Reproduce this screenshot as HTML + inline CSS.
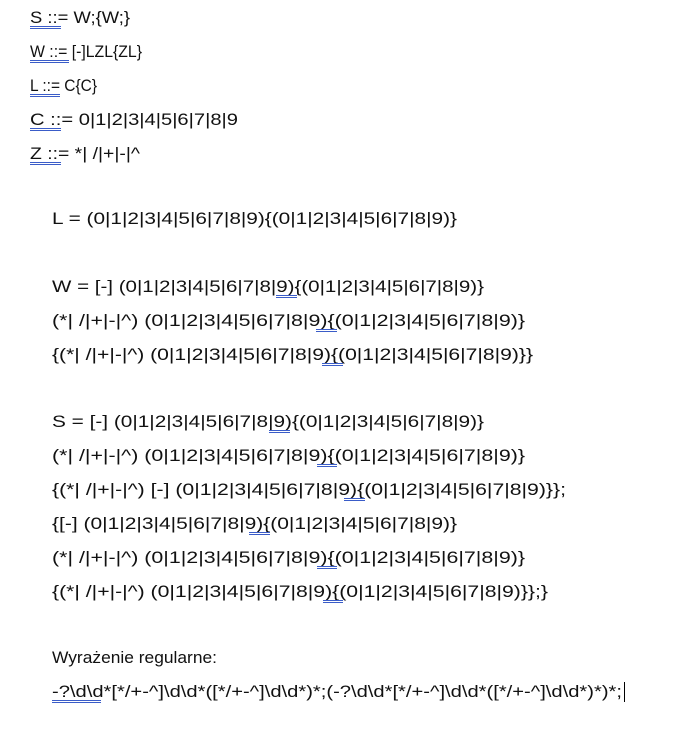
<!DOCTYPE html>
<html><head><meta charset="utf-8"><style>
html,body{margin:0;padding:0;background:#fff;width:683px;height:729px;overflow:hidden}
svg text{font-family:"Liberation Sans",sans-serif;font-size:16.5px;fill:#111}
</style></head><body>
<svg width="683" height="729" xmlns="http://www.w3.org/2000/svg">
<text x="30" y="23" textLength="100" lengthAdjust="spacingAndGlyphs">S ::= W;{W;}</text>
<text x="30" y="57" textLength="112" lengthAdjust="spacingAndGlyphs">W ::= [-]LZL{ZL}</text>
<text x="30" y="91" textLength="67" lengthAdjust="spacingAndGlyphs">L ::= C{C}</text>
<text x="30" y="125" textLength="208" lengthAdjust="spacingAndGlyphs">C ::= 0|1|2|3|4|5|6|7|8|9</text>
<text x="30" y="159" textLength="110" lengthAdjust="spacingAndGlyphs">Z ::= *| /|+|-|^</text>
<text x="52" y="224" textLength="405" lengthAdjust="spacingAndGlyphs">L = (0|1|2|3|4|5|6|7|8|9){(0|1|2|3|4|5|6|7|8|9)}</text>
<text x="52" y="292" textLength="432" lengthAdjust="spacingAndGlyphs">W = [-] (0|1|2|3|4|5|6|7|8|9){(0|1|2|3|4|5|6|7|8|9)}</text>
<text x="52" y="326" textLength="473" lengthAdjust="spacingAndGlyphs">(*| /|+|-|^) (0|1|2|3|4|5|6|7|8|9){(0|1|2|3|4|5|6|7|8|9)}</text>
<text x="52" y="360" textLength="481" lengthAdjust="spacingAndGlyphs">{(*| /|+|-|^) (0|1|2|3|4|5|6|7|8|9){(0|1|2|3|4|5|6|7|8|9)}}</text>
<text x="52" y="427" textLength="432" lengthAdjust="spacingAndGlyphs">S = [-] (0|1|2|3|4|5|6|7|8|9){(0|1|2|3|4|5|6|7|8|9)}</text>
<text x="52" y="461" textLength="473" lengthAdjust="spacingAndGlyphs">(*| /|+|-|^) (0|1|2|3|4|5|6|7|8|9){(0|1|2|3|4|5|6|7|8|9)}</text>
<text x="52" y="495" textLength="514" lengthAdjust="spacingAndGlyphs">{(*| /|+|-|^) [-] (0|1|2|3|4|5|6|7|8|9){(0|1|2|3|4|5|6|7|8|9)}};</text>
<text x="52" y="529" textLength="405" lengthAdjust="spacingAndGlyphs">{[-] (0|1|2|3|4|5|6|7|8|9){(0|1|2|3|4|5|6|7|8|9)}</text>
<text x="52" y="563" textLength="473" lengthAdjust="spacingAndGlyphs">(*| /|+|-|^) (0|1|2|3|4|5|6|7|8|9){(0|1|2|3|4|5|6|7|8|9)}</text>
<text x="52" y="597" textLength="496" lengthAdjust="spacingAndGlyphs">{(*| /|+|-|^) (0|1|2|3|4|5|6|7|8|9){(0|1|2|3|4|5|6|7|8|9)}};}</text>
<text x="52" y="663" textLength="165" lengthAdjust="spacingAndGlyphs">Wyrażenie regularne:</text>
<text x="52" y="697" textLength="570" lengthAdjust="spacingAndGlyphs">-?\d\d*[*/+-^]\d\d*([*/+-^]\d\d*)*;(-?\d\d*[*/+-^]\d\d*([*/+-^]\d\d*)*)*;</text>
<g stroke="#3a5cc8" stroke-width="1">
<path d="M30 26.5H61M30 28.5H61M30 60.5H69M30 62.5H69M30 94.5H60M30 96.5H60M30 128.5H61M30 130.5H61M30 162.5H61M30 164.5H61"/>
<path d="M276 295.5H297M276 297.5H297M316 329.5H337M316 331.5H337M322 363.5H343M322 365.5H343"/>
<path d="M269 430.5H290M269 432.5H290M317 464.5H337M317 466.5H337M344 498.5H365M344 500.5H365M249 532.5H270M249 534.5H270M317 566.5H337M317 568.5H337M323 600.5H343M323 602.5H343"/>
<path d="M52 700.5H101M52 702.5H101"/>
</g>
<path d="M624.5 682V702" stroke="#000" stroke-width="1"/>
</svg>
</body></html>
